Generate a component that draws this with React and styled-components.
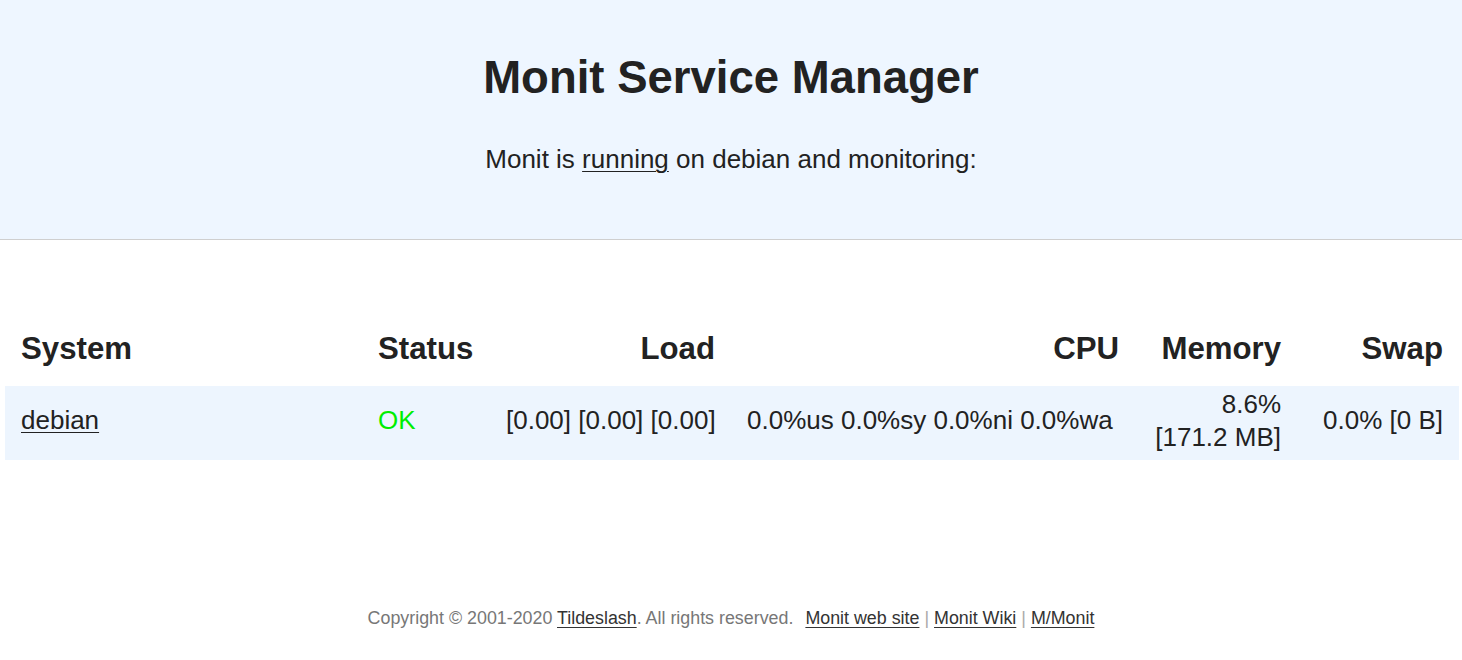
import React from "react";
import styled, { createGlobalStyle } from "styled-components";

const Global = createGlobalStyle`
  html, body { margin: 0; padding: 0; background: #fff; }
  body {
    font-family: "Liberation Sans", Arial, sans-serif;
    color: #222;
    font-size: 26px;
  }
`;

const Header = styled.header`
  background: #eef6ff;
  border-bottom: 1px solid #cfcfcf;
  height: 240px;
  box-sizing: border-box;
  padding-top: 52px;
  text-align: center;
`;

const Title = styled.h1`
  margin: 0;
  font-size: 45.5px;
  font-weight: bold;
  line-height: 52px;
  color: #222;
`;

const Sub = styled.p`
  margin: 40px 0 0;
  font-size: 26px;
  line-height: 30px;
`;

const Link = styled.a`
  color: #222;
  text-decoration: underline;
  text-decoration-thickness: 1px;
  text-underline-offset: 3px;
`;

const Main = styled.main`
  padding: 72px 3px 0 5px;
`;

const Table = styled.table`
  width: 1454px;
  border-collapse: collapse;
  table-layout: fixed;
`;

const Th = styled.th`
  font-size: 31.2px;
  font-weight: bold;
  height: 74px;
  padding: 0 16px;
  text-align: ${(p) => p.$align || "left"};
  vertical-align: middle;
  color: #222;
`;

const Row = styled.tr`
  background: #edf5fe;
`;

const Td = styled.td`
  height: 74px;
  box-sizing: border-box;
  padding: 0 16px 5px;
  font-size: 26px;
  line-height: 33px;
  text-align: ${(p) => p.$align || "left"};
  vertical-align: middle;
  color: ${(p) => p.$color || "#222"};
  white-space: ${(p) => (p.$nowrap ? "nowrap" : "normal")};
`;

const Footer = styled.footer`
  margin-top: 148px;
  text-align: center;
  font-size: 17.85px;
  color: #777;
`;

const FootLink = styled.a`
  color: #333;
  text-decoration: underline;
  text-underline-offset: 3px;
`;

const Links = styled.span`
  margin-left: 12px;
`;

const Sep = styled.span`
  color: #aaa;
`;

export default function App() {
  return (
    <>
      <Global />
      <Header>
        <Title>Monit Service Manager</Title>
        <Sub>
          Monit is <Link href="#">running</Link> on debian and monitoring:
        </Sub>
      </Header>
      <Main>
        <Table>
          <colgroup>
            <col style={{ width: 357 }} />
            <col style={{ width: 128 }} />
            <col style={{ width: 241 }} />
            <col style={{ width: 404 }} />
            <col style={{ width: 162 }} />
            <col style={{ width: 162 }} />
          </colgroup>
          <thead>
            <tr>
              <Th>System</Th>
              <Th>Status</Th>
              <Th $align="right">Load</Th>
              <Th $align="right">CPU</Th>
              <Th $align="right">Memory</Th>
              <Th $align="right">Swap</Th>
            </tr>
          </thead>
          <tbody>
            <Row>
              <Td>
                <Link href="#">debian</Link>
              </Td>
              <Td $color="#00ee00">OK</Td>
              <Td $align="right" $nowrap>[0.00] [0.00] [0.00]</Td>
              <Td $nowrap>0.0%us 0.0%sy 0.0%ni 0.0%wa</Td>
              <Td $align="right">8.6% [171.2 MB]</Td>
              <Td $align="right" $nowrap>0.0% [0 B]</Td>
            </Row>
          </tbody>
        </Table>
      </Main>
      <Footer>
        Copyright © 2001-2020 <FootLink href="#">Tildeslash</FootLink>. All rights reserved.
        <Links>
          <FootLink href="#">Monit web site</FootLink> <Sep>|</Sep>{" "}
          <FootLink href="#">Monit Wiki</FootLink> <Sep>|</Sep>{" "}
          <FootLink href="#">M/Monit</FootLink>
        </Links>
      </Footer>
    </>
  );
}
